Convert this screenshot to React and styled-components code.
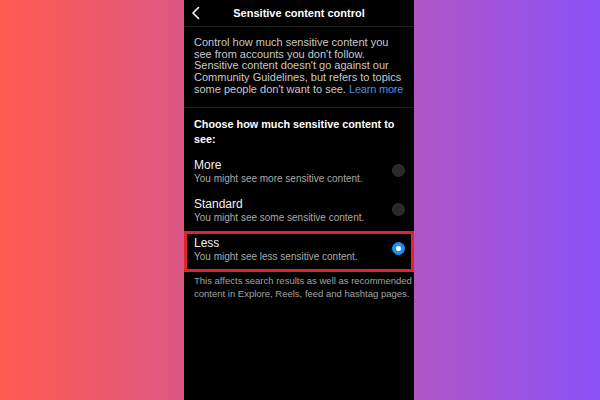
import React from "react";
import styled, { createGlobalStyle } from "styled-components";

const Global = createGlobalStyle`
  html, body { margin: 0; padding: 0; }
  body {
    width: 600px;
    height: 400px;
    overflow: hidden;
    font-family: "Liberation Sans", Arial, sans-serif;
  }
`;

const Backdrop = styled.div`
  width: 600px;
  height: 400px;
  display: flex;
  justify-content: center;
  padding-right: 2px;
  box-sizing: border-box;
  background: linear-gradient(90deg, #ff5b50 0%, #8b52f8 100%);
`;

const Phone = styled.div`
  width: 230px;
  height: 400px;
  background: #000;
  display: flex;
  flex-direction: column;
  color: #f4f4f4;
  overflow: hidden;
`;

const Header = styled.div`
  height: 26px;
  border-bottom: 1px solid #1f1f1f;
  display: grid;
  grid-template-columns: 30px 1fr 30px;
  align-items: center;
`;

const Back = styled.div`
  display: flex;
  align-items: center;
  padding-left: 7px;
`;

const Title = styled.div`
  text-align: center;
  font-size: 11px;
  font-weight: 700;
  color: #fff;
`;

const Intro = styled.p`
  margin: 0;
  padding: 10px 6px 11px 10px;
  font-size: 11px;
  line-height: 11.7px;
  color: #c9c9c9;
  white-space: nowrap;
  border-bottom: 1px solid #1f1f1f;
`;

const Link = styled.span`
  color: #4c8fe4;
  letter-spacing: -0.2px;
`;

const Heading = styled.h2`
  margin: 0;
  padding: 9px 10px 5px;
  font-size: 10.8px;
  line-height: 15px;
  font-weight: 700;
  color: #fff;
`;

const Option = styled.div`
  position: relative;
  height: 39px;
  padding: 0 9px 0 10px;
  display: flex;
  align-items: center;
  justify-content: space-between;
  ${(p) =>
    p.$highlight &&
    `
    &::after {
      content: "";
      position: absolute;
      left: 0;
      right: 0;
      top: 1px;
      bottom: -3px;
      border: 3px solid #e0242e;
      pointer-events: none;
    }
  `}
`;

const OptionText = styled.div`
  display: flex;
  flex-direction: column;
`;

const OptionTitle = styled.div`
  font-size: 12px;
  line-height: 14px;
  color: #f2f2f2;
`;

const OptionSub = styled.div`
  font-size: 10px;
  line-height: 13px;
  color: #a9a9a9;
`;

const Radio = styled.div`
  width: 13px;
  height: 13px;
  margin-top: -2px;
  border-radius: 50%;
  box-sizing: border-box;
  background: ${(p) => (p.$on ? "#1d8ff0" : "#2a2a2a")};
  border: 1px solid ${(p) => (p.$on ? "#1d8ff0" : "#333")};
  display: flex;
  align-items: center;
  justify-content: center;
  &::after {
    content: "";
    display: ${(p) => (p.$on ? "block" : "none")};
    width: 5px;
    height: 5px;
    border-radius: 50%;
    background: #fff;
  }
`;

const Note = styled.p`
  margin: 0;
  padding: 5px 6px 0 10px;
  font-size: 9.5px;
  line-height: 13.5px;
  color: #a3a3a3;
  white-space: nowrap;
`;

const options = [
  { title: "More", sub: "You might see more sensitive content." },
  { title: "Standard", sub: "You might see some sensitive content." },
  { title: "Less", sub: "You might see less sensitive content.", on: true },
];

export default function App() {
  return (
    <>
      <Global />
      <Backdrop>
        <Phone>
          <Header>
            <Back>
              <svg width="10" height="14" viewBox="0 0 10 14">
                <path d="M7.5 1.5 L2 7 L7.5 12.5" fill="none" stroke="#fff" strokeWidth="1.6" strokeLinecap="round" strokeLinejoin="round" />
              </svg>
            </Back>
            <Title>Sensitive content control</Title>
            <div />
          </Header>
          <Intro>
            Control how much sensitive content you
            <br />
            see from accounts you don't follow.
            <br />
            Sensitive content doesn't go against our
            <br />
            Community Guidelines, but refers to topics
            <br />
            some people don't want to see. <Link>Learn more</Link>
          </Intro>
          <Heading>Choose how much sensitive content to see:</Heading>
          {options.map((o) => (
            <Option key={o.title} $highlight={o.on}>
              <OptionText>
                <OptionTitle>{o.title}</OptionTitle>
                <OptionSub>{o.sub}</OptionSub>
              </OptionText>
              <Radio $on={o.on} />
            </Option>
          ))}
          <Note>
            This affects search results as well as recommended
            <br />
            content in Explore, Reels, feed and hashtag pages.
          </Note>
        </Phone>
      </Backdrop>
    </>
  );
}
